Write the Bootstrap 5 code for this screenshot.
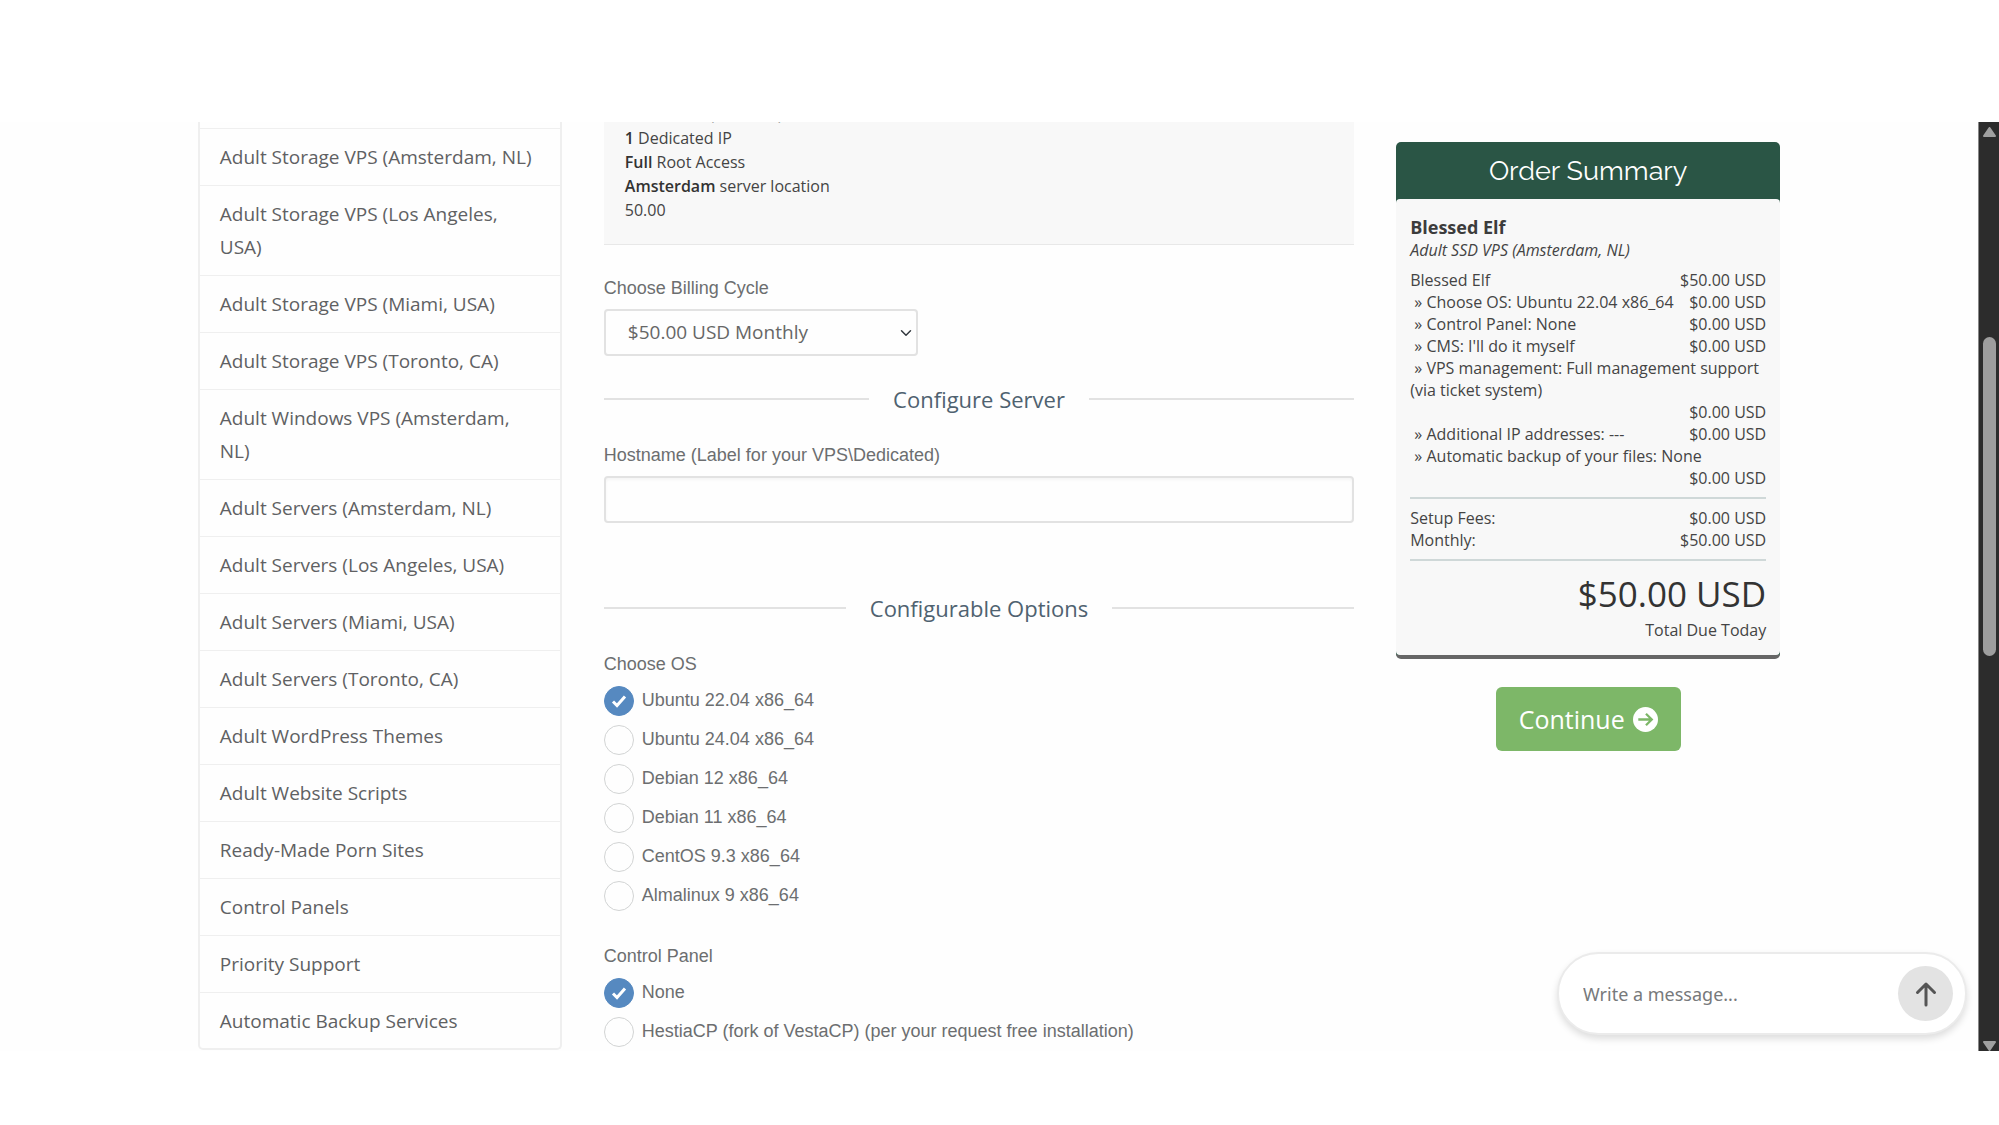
<!DOCTYPE html>
<html lang="en">
<head>
<meta charset="utf-8">
<meta name="viewport" content="width=device-width, initial-scale=1">
<title>Configure Server</title>
<link href="https://cdn.jsdelivr.net/npm/bootstrap@5.3.0/dist/css/bootstrap.min.css" rel="stylesheet">
<style>
body{font-family:"Open Sans","Noto Sans",sans-serif;background:#fff;color:#5f6163;padding:122px 0 74px}
.viewport{background:#fefefe;min-height:0}
.page-area{overflow:hidden}
.shell{padding:0 10%;gap:42px}
/* category menu */
.cats{width:364px;border:2px solid #efefef;border-top:0;border-radius:0 0 5px 5px;padding-top:6px}
.cats .list-group-item{font-size:19px;line-height:33px;padding:12px 20px 11px;border:0;border-top:1px solid #efefef;color:#5f6163;background:transparent}
.cats .list-group-item:last-child{padding-bottom:10px}
/* configuration form */
.product{background:#f8f8f8;border-bottom:1px solid #e8e8e8;color:#444;font-size:16px;line-height:24px;padding:0 21px 22px;margin-top:-20px}
.product b{font-weight:600;color:#333}
.field-label{font-family:"Liberation Sans",Arial,sans-serif;font-size:18px;line-height:26px;margin-bottom:8px;color:#6c6e70}
.field{height:47px;border:2px solid #e2e2e2;border-radius:4px;font-size:19px;color:#666;background-color:#fefefe}
input.field{box-shadow:inset 0 2px 3px rgba(0,0,0,.04)}
select.field{width:314px;padding:0 28px 0 22px;background-position:right 3px center;background-size:14px 12px}
.sub-heading{gap:24px;font-size:22px;line-height:30px;color:#4f6270}
.sub-heading::before,.sub-heading::after{content:"";flex:1;height:2px;background:#e2e2e2}
.choice{min-height:39px;font-family:"Liberation Sans",Arial,sans-serif;font-size:18px;gap:8px;color:#6c6e70}
.choice .form-check-input{width:30px;height:30px;margin:0;border:1px solid #d2d4d4;background-color:#fefefe;flex:none}
.choice .form-check-input:checked{background-color:#5689c0;border-color:#5689c0;background-size:20px 20px;background-image:url("data:image/svg+xml,%3Csvg xmlns='http://www.w3.org/2000/svg' viewBox='0 0 20 20'%3E%3Cpath d='M4 10.5l4 4 8-9' fill='none' stroke='white' stroke-width='3'/%3E%3C/svg%3E")}
.mt-label{margin-top:30px}
.mt-section{margin-top:28px}
.mt-section-lg{margin-top:70px}
/* order summary */
.side{width:384px;padding-top:20px}
.summary{background:#2a5545;border-bottom:4px solid #666;border-radius:5px}
.summary h2{font-family:Raleway,Lato,sans-serif;font-size:27px;line-height:57px;color:#fff}
.summary-body{background:#f8f8f8;border-radius:4px;color:#444;font-size:16px;line-height:22px;padding:16px 14px 14px}
.product-title{font-size:18px;line-height:24px;font-weight:700;color:#3c3c3c}
.rule{height:2px;background:#cfd8d8;margin:8px 0}
.total{font-size:35px;line-height:50px;color:#333}
.go{background:#7db768;color:#fff;border:0;border-radius:6px;font-size:25px;line-height:36px;padding:14px 23px 14px;margin-top:28px}
.go:hover{background:#6ca757;color:#fff}
/* chat box */
.chat{right:11px;bottom:16px;width:410px;height:83px;border:2px solid #ebebeb;border-radius:42px;background:#fff;box-shadow:0 4px 7px rgba(0,0,0,.13);padding:0 12px 0 24px}
.chat input{font-family:"Noto Sans",sans-serif;font-size:18px;color:#666;padding:2px 0 0!important;box-shadow:none!important}
.chat input::placeholder{color:#77797b;opacity:1}
.chat button{width:55px;height:55px;background:#e3e3e3;flex:none}
/* scroll bar */
.bar{width:21px;background:#2c2c2c;border-left:1px solid #888;padding:5px 0 0}
.track{padding-top:200px}
.thumb{width:13px;height:319px;border-radius:7px;background:#9e9e9e}
</style>
</head>
<body class="vh-100 d-flex flex-column">
<div class="viewport d-flex flex-grow-1 position-relative">
  <div class="page-area flex-grow-1 position-relative">
    <div class="shell d-flex align-items-start">
      <nav class="cats list-group list-group-flush flex-shrink-0" aria-label="Categories">
        <a class="list-group-item" href="#">Adult Storage VPS (Amsterdam, NL)</a>
        <a class="list-group-item" href="#">Adult Storage VPS (Los Angeles, USA)</a>
        <a class="list-group-item" href="#">Adult Storage VPS (Miami, USA)</a>
        <a class="list-group-item" href="#">Adult Storage VPS (Toronto, CA)</a>
        <a class="list-group-item" href="#">Adult Windows VPS (Amsterdam, NL)</a>
        <a class="list-group-item" href="#">Adult Servers (Amsterdam, NL)</a>
        <a class="list-group-item" href="#">Adult Servers (Los Angeles, USA)</a>
        <a class="list-group-item" href="#">Adult Servers (Miami, USA)</a>
        <a class="list-group-item" href="#">Adult Servers (Toronto, CA)</a>
        <a class="list-group-item" href="#">Adult WordPress Themes</a>
        <a class="list-group-item" href="#">Adult Website Scripts</a>
        <a class="list-group-item" href="#">Ready-Made Porn Sites</a>
        <a class="list-group-item" href="#">Control Panels</a>
        <a class="list-group-item" href="#">Priority Support</a>
        <a class="list-group-item" href="#">Automatic Backup Services</a>
      </nav>

      <form class="flex-grow-1" id="config">
        <div class="product">
          Bandwidth (no limits)<br>
          <b>1</b> Dedicated IP<br>
          <b>Full</b> Root Access<br>
          <b>Amsterdam</b> server location<br>
          50.00
        </div>

        <label class="field-label d-block mt-label" for="cycle">Choose Billing Cycle</label>
        <select class="form-select field" id="cycle"><option>$50.00 USD Monthly</option></select>

        <div class="sub-heading d-flex align-items-center mt-section">Configure Server</div>
        <label class="field-label d-block mt-section" for="host">Hostname (Label for your VPS\Dedicated)</label>
        <input class="form-control field" id="host" type="text">

        <div class="sub-heading d-flex align-items-center mt-section-lg">Configurable Options</div>
        <fieldset class="mt-section">
          <legend class="field-label mb-0 pb-1">Choose OS</legend>
          <div class="choice d-flex align-items-center"><input class="form-check-input" type="radio" name="os" id="os1" checked><label for="os1">Ubuntu 22.04 x86_64</label></div>
          <div class="choice d-flex align-items-center"><input class="form-check-input" type="radio" name="os" id="os2"><label for="os2">Ubuntu 24.04 x86_64</label></div>
          <div class="choice d-flex align-items-center"><input class="form-check-input" type="radio" name="os" id="os3"><label for="os3">Debian 12 x86_64</label></div>
          <div class="choice d-flex align-items-center"><input class="form-check-input" type="radio" name="os" id="os4"><label for="os4">Debian 11 x86_64</label></div>
          <div class="choice d-flex align-items-center"><input class="form-check-input" type="radio" name="os" id="os5"><label for="os5">CentOS 9.3 x86_64</label></div>
          <div class="choice d-flex align-items-center"><input class="form-check-input" type="radio" name="os" id="os6"><label for="os6">Almalinux 9 x86_64</label></div>
        </fieldset>
        <fieldset class="mt-section">
          <legend class="field-label mb-0 pb-1">Control Panel</legend>
          <div class="choice d-flex align-items-center"><input class="form-check-input" type="radio" name="cp" id="cp1" checked><label for="cp1">None</label></div>
          <div class="choice d-flex align-items-center"><input class="form-check-input" type="radio" name="cp" id="cp2"><label for="cp2">HestiaCP (fork of VestaCP) (per your request free installation)</label></div>
        </fieldset>
      </form>

      <aside class="side flex-shrink-0 text-center">
        <section class="summary text-start">
          <h2 class="text-center fw-normal mb-0">Order Summary</h2>
          <div class="summary-body">
            <div class="product-title">Blessed Elf</div>
            <div class="fst-italic mb-2">Adult SSD VPS (Amsterdam, NL)</div>
            <div class="d-flex flex-wrap"><span>Blessed Elf</span><span class="ms-auto">$50.00 USD</span></div>
            <div class="d-flex flex-wrap"><span>&nbsp;» Choose OS: Ubuntu 22.04 x86_64</span><span class="ms-auto">$0.00 USD</span></div>
            <div class="d-flex flex-wrap"><span>&nbsp;» Control Panel: None</span><span class="ms-auto">$0.00 USD</span></div>
            <div class="d-flex flex-wrap"><span>&nbsp;» CMS: I'll do it myself</span><span class="ms-auto">$0.00 USD</span></div>
            <div class="d-flex flex-wrap"><span>&nbsp;» VPS management: Full management support (via ticket system)</span><span class="ms-auto">$0.00 USD</span></div>
            <div class="d-flex flex-wrap"><span>&nbsp;» Additional IP addresses: ---</span><span class="ms-auto">$0.00 USD</span></div>
            <div class="d-flex flex-wrap"><span>&nbsp;» Automatic backup of your files: None</span><span class="ms-auto">$0.00 USD</span></div>
            <div class="rule"></div>
            <div class="d-flex justify-content-between"><span>Setup Fees:</span><span>$0.00 USD</span></div>
            <div class="d-flex justify-content-between"><span>Monthly:</span><span>$50.00 USD</span></div>
            <div class="rule"></div>
            <div class="total text-end">$50.00 USD</div>
            <div class="text-end">Total Due Today</div>
          </div>
        </section>
        <button class="go btn d-inline-flex align-items-center gap-2" type="submit" form="config">Continue
          <svg width="25" height="25" viewBox="0 0 26 26" aria-hidden="true"><circle cx="13" cy="13" r="13" fill="#fff"/><path d="M5.5 13H19M13.5 7l6 6-6 6" fill="none" stroke="#7db768" stroke-width="2.4"/></svg>
        </button>
      </aside>
    </div>

    <div class="chat position-absolute d-flex align-items-center">
      <input class="form-control border-0 bg-transparent" type="text" placeholder="Write a message..." aria-label="Write a message">
      <button class="btn rounded-circle border-0 p-0" type="button" aria-label="Send">
        <svg width="24" height="28" viewBox="0 0 24 28" fill="none" stroke="#555" stroke-width="3" stroke-linecap="round" stroke-linejoin="round" aria-hidden="true"><path d="M12 25V4M3.500 12.500L12 4l8.500 8.500"/></svg>
      </button>
    </div>
  </div>

  <div class="bar d-flex flex-column align-items-center flex-shrink-0" aria-hidden="true">
    <svg width="13" height="10" viewBox="0 0 13 10"><path d="M6.500 1L12 9H1z" fill="#a0a0a0" stroke="#a0a0a0" stroke-width="2" stroke-linejoin="round"/></svg>
    <div class="track flex-grow-1"><div class="thumb"></div></div>
    <svg width="13" height="10" viewBox="0 0 13 10"><path d="M6.500 9L12 1H1z" fill="#a0a0a0" stroke="#a0a0a0" stroke-width="2" stroke-linejoin="round"/></svg>
  </div>
</div>
<script src="https://cdn.jsdelivr.net/npm/bootstrap@5.3.0/dist/js/bootstrap.bundle.min.js"></script>
</body>
</html>
